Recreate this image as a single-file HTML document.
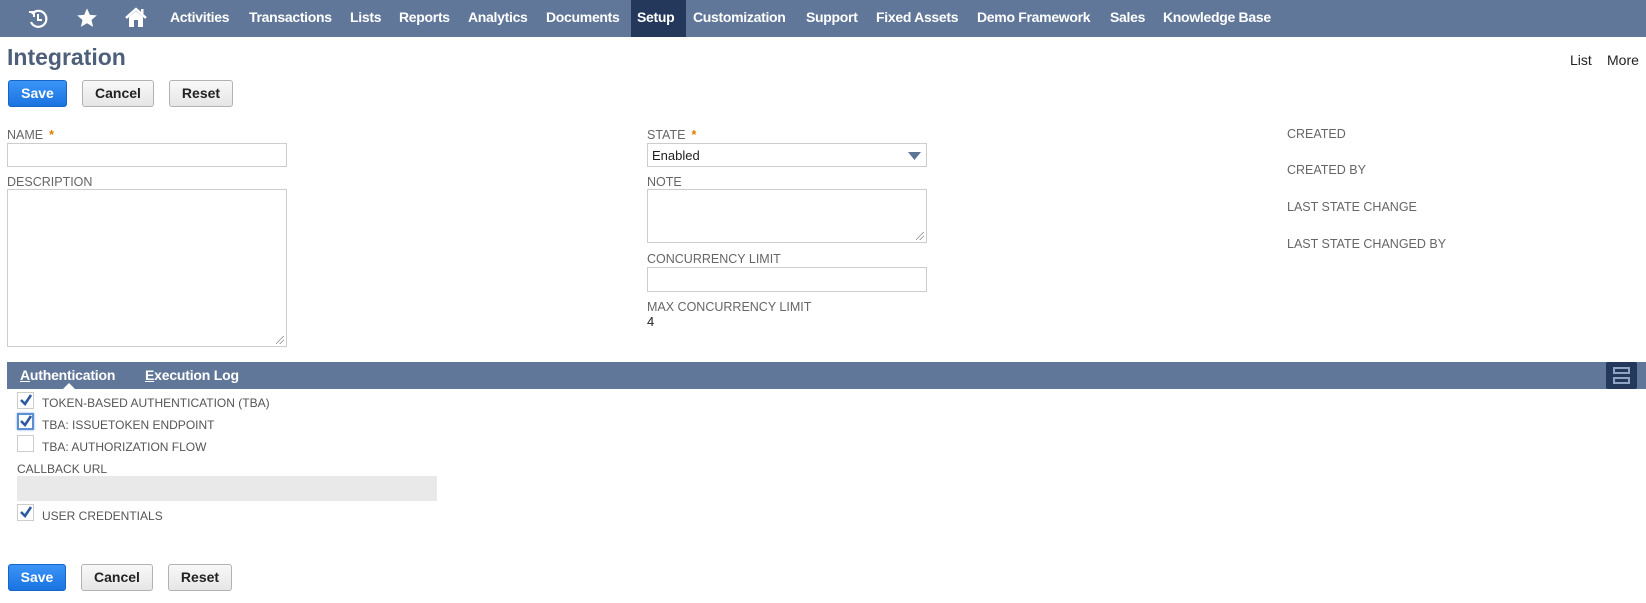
<!DOCTYPE html>
<html><head><meta charset="utf-8"><style>
*{box-sizing:border-box;margin:0;padding:0}
body{width:1646px;height:603px;overflow:hidden;background:#fff;font-family:"Liberation Sans",Arial,sans-serif;position:relative}
.a{position:absolute}
.nav{left:0;top:0;width:1646px;height:37px;background:#607799}
.ni{position:absolute;top:0;height:37px;line-height:35px;color:#fff;font-weight:bold;font-size:14px;padding:0 6px;letter-spacing:-0.3px}
.ni.sel{background:#24385b}
.lbl{position:absolute;font-size:12.5px;color:#666;white-space:nowrap}
.star{color:#e07b00;margin-left:6px;font-weight:bold}
.inp{position:absolute;border:1px solid #ccc;background:#fff}
.btn{position:absolute;height:27px;border:1px solid #b2b2b2;border-radius:3px;background:linear-gradient(#f8f8f8,#e6e6e6);font-weight:bold;font-size:14px;color:#222;text-align:center;line-height:25px}
.save{background:linear-gradient(#3b94f6,#1a73e0);border-color:#1467c8;color:#fff}
.cb{position:absolute;width:17px;height:17px;border:1px solid #ccc;background:#fff}
.cb svg{position:absolute;left:1px;top:0}
.cl{position:absolute;font-size:12px;color:#555;white-space:nowrap}
.rz{position:absolute;right:2px;bottom:2px;width:8px;height:8px;background:linear-gradient(135deg,transparent 45%,#888 45%,#888 52%,transparent 52%,transparent 70%,#888 70%,#888 77%,transparent 77%)}
</style></head><body>
<div class="a nav">
 <svg class="a" style="left:27px;top:8px" width="22" height="22" viewBox="0 0 22 22"><path d="M5 6 A8 8 0 1 1 4 14" fill="none" stroke="#fff" stroke-width="2.2"/><path d="M2 4 L7 4 L7 9" fill="none" stroke="#fff" stroke-width="2"/><path d="M11 6 V12 H15" fill="none" stroke="#fff" stroke-width="2"/></svg>
 <svg class="a" style="left:76px;top:7px" width="22" height="22" viewBox="0 0 24 24"><path d="M12 1.5l3.1 7.1 7.6.6-5.8 5 1.8 7.5L12 17.7l-6.7 4 1.8-7.5-5.8-5 7.6-.6z" fill="#fff"/></svg>
 <svg class="a" style="left:124px;top:6px" width="24" height="24" viewBox="0 0 24 24"><path d="M2 12 L12 3 L22 12" fill="none" stroke="#fff" stroke-width="2.5"/><path d="M5 11 V21 H19 V11 L12 5Z" fill="#fff"/><rect x="10" y="14" width="4" height="7" fill="#607799"/><rect x="17" y="3" width="2.5" height="5" fill="#fff"/></svg>
 <div class="ni" style="left:164px">Activities</div>
 <div class="ni" style="left:243px">Transactions</div>
 <div class="ni" style="left:344px">Lists</div>
 <div class="ni" style="left:393px">Reports</div>
 <div class="ni" style="left:462px">Analytics</div>
 <div class="ni" style="left:540px">Documents</div>
 <div class="ni sel" style="left:631px;width:55px">Setup</div>
 <div class="ni" style="left:687px">Customization</div>
 <div class="ni" style="left:800px">Support</div>
 <div class="ni" style="left:870px">Fixed Assets</div>
 <div class="ni" style="left:971px">Demo Framework</div>
 <div class="ni" style="left:1104px">Sales</div>
 <div class="ni" style="left:1157px">Knowledge Base</div>
</div>
<div class="a" style="left:7px;top:44px;font-size:23px;font-weight:bold;color:#4d5f79">Integration</div>
<div class="a" style="left:1570px;top:52px;font-size:14px;color:#222">List</div>
<div class="a" style="left:1607px;top:52px;font-size:14px;color:#222">More</div>
<div class="btn save" style="left:8px;top:80px;width:59px">Save</div>
<div class="btn" style="left:82px;top:80px;width:72px">Cancel</div>
<div class="btn" style="left:169px;top:80px;width:64px">Reset</div>

<div class="lbl" style="left:7px;top:128px">NAME<span class="star">*</span></div>
<div class="inp" style="left:7px;top:143px;width:280px;height:24px"></div>
<div class="lbl" style="left:7px;top:175px">DESCRIPTION</div>
<div class="inp" style="left:7px;top:189px;width:280px;height:158px"><div class="rz"></div></div>

<div class="lbl" style="left:647px;top:128px">STATE<span class="star">*</span></div>
<div class="inp" style="left:647px;top:143px;width:280px;height:24px;font-size:13px;color:#222;padding:4px 0 0 4px">Enabled<svg class="a" style="right:5px;top:8px" width="13" height="8"><path d="M0 0H13L6.5 8Z" fill="#5b7497"/></svg></div>
<div class="lbl" style="left:647px;top:175px">NOTE</div>
<div class="inp" style="left:647px;top:189px;width:280px;height:54px"><div class="rz"></div></div>
<div class="lbl" style="left:647px;top:252px">CONCURRENCY LIMIT</div>
<div class="inp" style="left:647px;top:267px;width:280px;height:25px"></div>
<div class="lbl" style="left:647px;top:300px">MAX CONCURRENCY LIMIT</div>
<div class="a" style="left:647px;top:314px;font-size:13px;color:#222">4</div>

<div class="lbl" style="left:1287px;top:127px">CREATED</div>
<div class="lbl" style="left:1287px;top:163px">CREATED BY</div>
<div class="lbl" style="left:1287px;top:200px">LAST STATE CHANGE</div>
<div class="lbl" style="left:1287px;top:237px">LAST STATE CHANGED BY</div>

<div class="a" style="left:7px;top:362px;width:1639px;height:27px;background:#607799"></div>
<div class="a" style="left:20px;top:367px;font-size:14px;font-weight:bold;color:#fff;letter-spacing:-0.2px"><u>A</u>uthentication</div>
<div class="a" style="left:145px;top:367px;font-size:14px;font-weight:bold;color:#fff;letter-spacing:-0.2px"><u>E</u>xecution Log</div>
<svg class="a" style="left:62px;top:383px" width="14" height="7"><path d="M0 7L7 0L14 7Z" fill="#fff"/></svg>
<div class="a" style="left:1606px;top:362px;width:31px;height:27px;background:#24385b;border-radius:2px"></div>
<div class="a" style="left:1613px;top:367px;width:17px;height:7px;border:2px solid #8fa3c2"></div>
<div class="a" style="left:1613px;top:377px;width:17px;height:7px;border:2px solid #8fa3c2"></div>

<div class="cb" style="left:17px;top:392px"><svg width="14" height="14"><path d="M2 7L6 11L12 2" fill="none" stroke="#2c5aa0" stroke-width="2.6"/></svg></div>
<div class="cl" style="left:42px;top:396px">TOKEN-BASED AUTHENTICATION (TBA)</div>
<div class="cb" style="left:17px;top:413px;border:2px solid #5b8fd6;box-shadow:0 0 2px #7aa7e8"><svg width="14" height="14"><path d="M1 6L5 10L11 1" fill="none" stroke="#2c5aa0" stroke-width="2.6"/></svg></div>
<div class="cl" style="left:42px;top:418px">TBA: ISSUETOKEN ENDPOINT</div>
<div class="cb" style="left:17px;top:435px"></div>
<div class="cl" style="left:42px;top:440px">TBA: AUTHORIZATION FLOW</div>
<div class="cl" style="left:17px;top:462px">CALLBACK URL</div>
<div class="a" style="left:17px;top:476px;width:420px;height:25px;background:#e9e9e9"></div>
<div class="cb" style="left:17px;top:504px"><svg width="14" height="14"><path d="M2 7L6 11L12 2" fill="none" stroke="#2c5aa0" stroke-width="2.6"/></svg></div>
<div class="cl" style="left:42px;top:509px">USER CREDENTIALS</div>

<div class="btn save" style="left:8px;top:564px;width:58px">Save</div>
<div class="btn" style="left:81px;top:564px;width:72px">Cancel</div>
<div class="btn" style="left:168px;top:564px;width:64px">Reset</div>
</body></html>
